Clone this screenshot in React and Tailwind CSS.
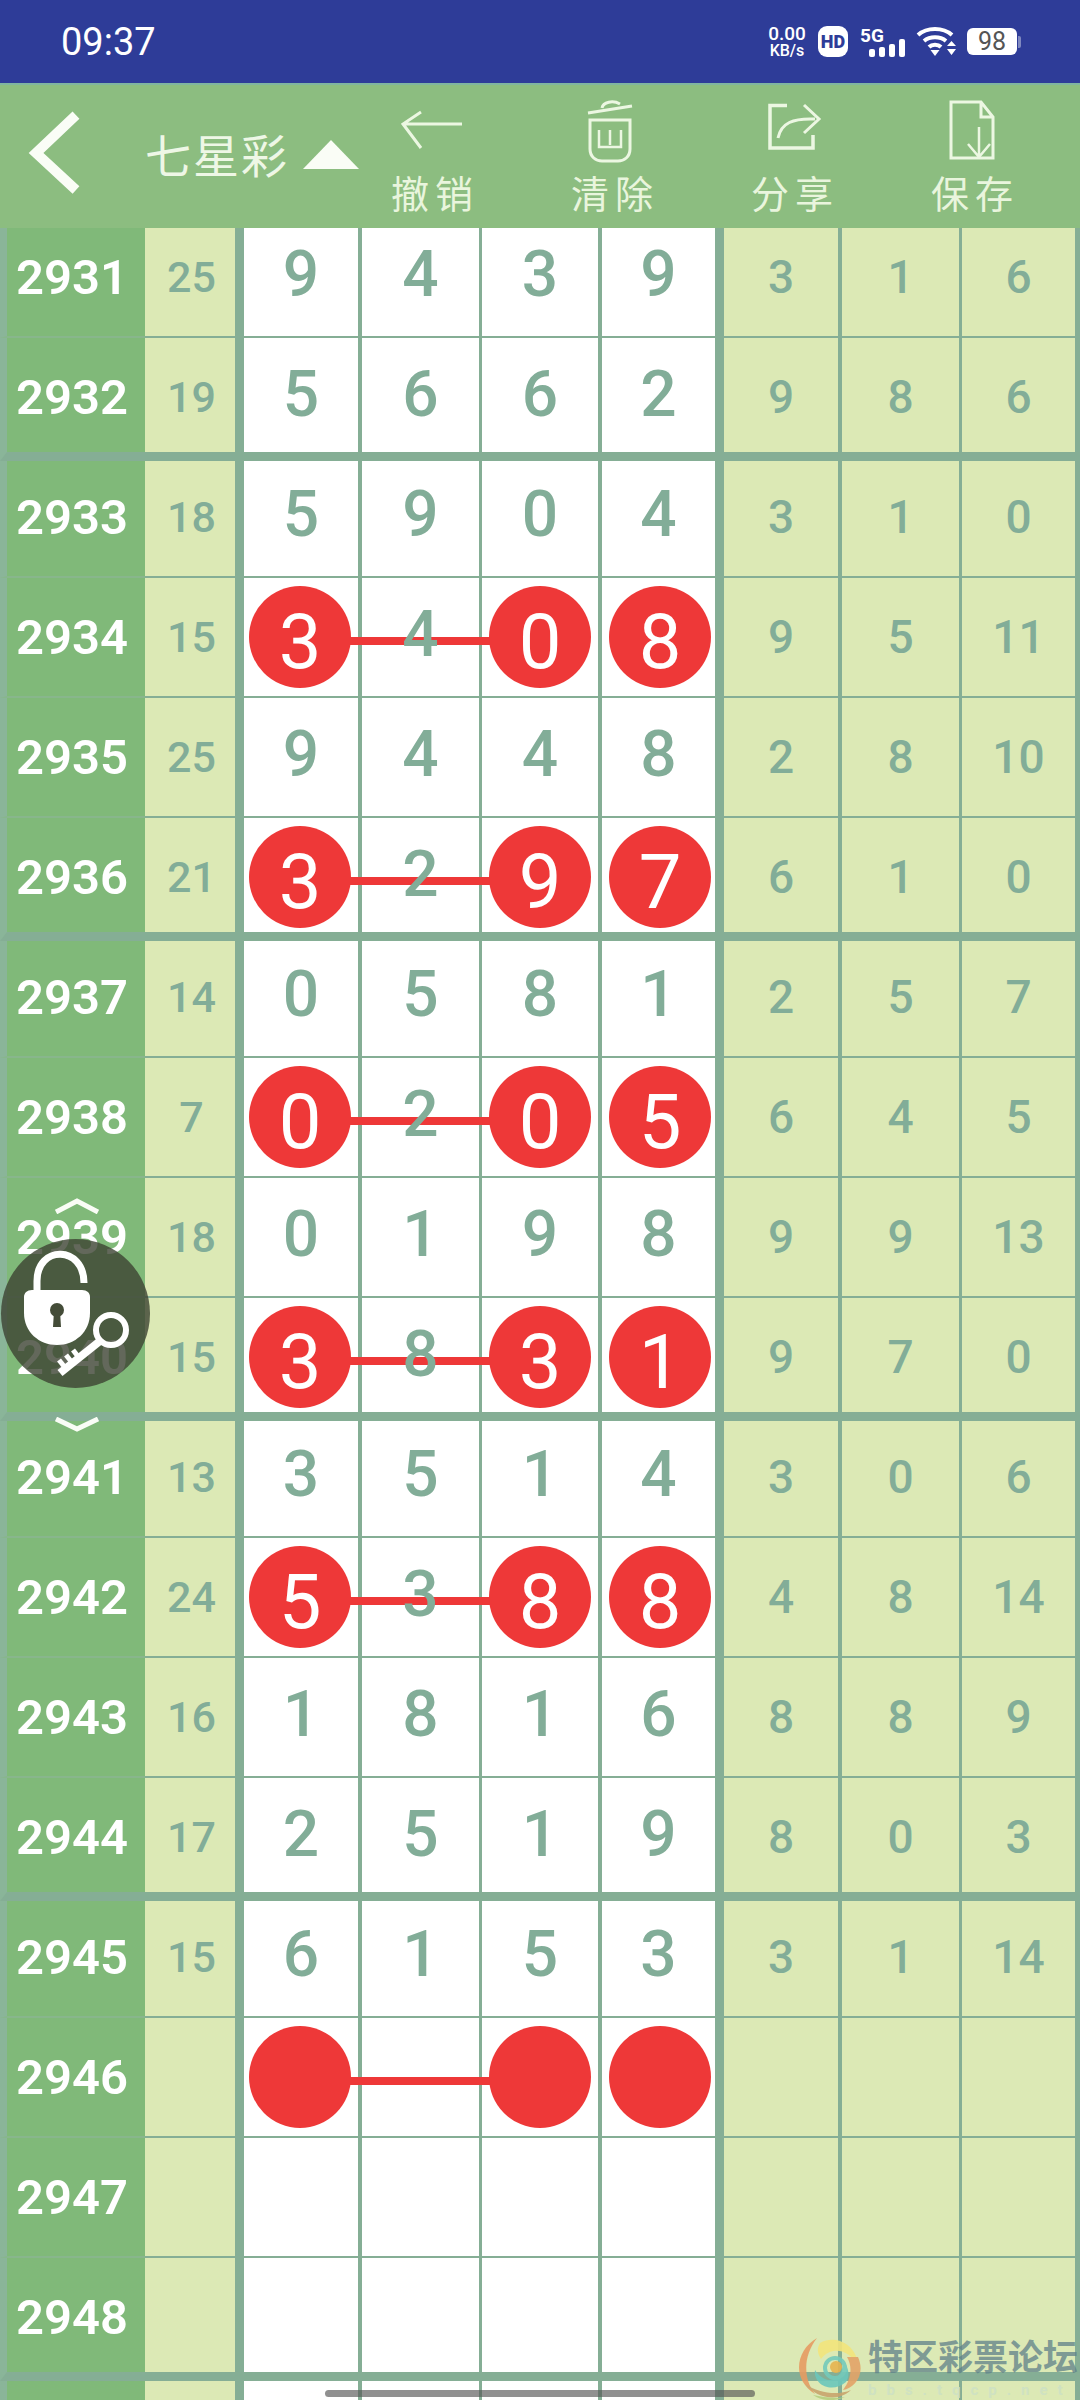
import React from "react";

const rows = [
  { no: 2931, sum: 25, d: [9, 4, 3, 9], r: [3, 1, 6], h: "h-[110px]", line: "pb-[2px]", left: "border-b-[2px] border-b-[#88b68c]", pad: "pb-[10px]" },
  { no: 2932, sum: 19, d: [5, 6, 6, 2], r: [9, 8, 6], pos: 3 },
  { no: 2933, sum: 18, d: [5, 9, 0, 4], r: [3, 1, 0], pos: 0 },
  { no: 2934, sum: 15, d: [3, 4, 0, 8], r: [9, 5, 11], pos: 1, hit: true },
  { no: 2935, sum: 25, d: [9, 4, 4, 8], r: [2, 8, 10], pos: 2 },
  { no: 2936, sum: 21, d: [3, 2, 9, 7], r: [6, 1, 0], pos: 3, hit: true },
  { no: 2937, sum: 14, d: [0, 5, 8, 1], r: [2, 5, 7], pos: 0 },
  { no: 2938, sum: 7, d: [0, 2, 0, 5], r: [6, 4, 5], pos: 1, hit: true },
  { no: 2939, sum: 18, d: [0, 1, 9, 8], r: [9, 9, 13], pos: 2 },
  { no: 2940, sum: 15, d: [3, 8, 3, 1], r: [9, 7, 0], pos: 3, hit: true },
  { no: 2941, sum: 13, d: [3, 5, 1, 4], r: [3, 0, 6], pos: 0 },
  { no: 2942, sum: 24, d: [5, 3, 8, 8], r: [4, 8, 14], pos: 1, hit: true },
  { no: 2943, sum: 16, d: [1, 8, 1, 6], r: [8, 8, 9], pos: 2 },
  { no: 2944, sum: 17, d: [2, 5, 1, 9], r: [8, 0, 3], pos: 3 },
  { no: 2945, sum: 15, d: [6, 1, 5, 3], r: [3, 1, 14], pos: 0 },
  { no: 2946, d: ["", "", "", ""], r: ["", "", ""], pos: 1, hit: true },
  { no: 2947, d: ["", "", "", ""], r: ["", "", ""], pos: 2 },
  { no: 2948, d: ["", "", "", ""], r: ["", "", ""], pos: 3 },
  { d: ["", "", "", ""], r: ["", "", ""], pos: 0 },
];

const posStyles = [
  { h: "h-[117px]", line: "pb-[2px]", left: "border-b-[2px] border-b-[#88b68c]", pad: "pb-[3px]" },
  { h: "h-[120px]", line: "pb-[2px]", left: "border-b-[2px] border-b-[#88b68c]", pad: "" },
  { h: "h-[120px]", line: "pb-[2px]", left: "border-b-[2px] border-b-[#88b68c]", pad: "" },
  { h: "h-[123px]", line: "pb-[9px]", left: "border-b-[9px] border-b-[#85ae95]", pad: "pt-[4px]" },
];

const dWidths = ["w-[114px]", "w-[117px]", "w-[116px]", "w-[113px]"];
const dGaps = ["ml-0", "ml-[4px]", "ml-[3px]", "ml-[4px]"];
const rWidths = ["w-[114px]", "w-[117px]", "w-[113px]"];
const rGaps = ["ml-[9px]", "ml-[4px]", "ml-[3px]"];

function Ball({ value, linked, nudge }) {
  return (
    <div className={`relative flex h-[102px] w-[102px] items-center justify-center rounded-full bg-[#ee3838] pt-[10px] text-[76px] leading-none text-white ${nudge}`}>
      {value}
      {linked && <div className="absolute left-[99px] top-[51px] h-[8px] w-[144px] bg-[#ee3838]" />}
    </div>
  );
}

function Row({ row }) {
  const s = row.h ? row : posStyles[row.pos];
  return (
    <div className={`flex ${s.h}`}>
      <div className={`flex w-[145px] items-center justify-center border-l-[7px] border-l-[#8ab599] bg-[#80b979] pr-[8px] text-[49px] font-semibold leading-none text-white ${s.left} ${s.pad}`}>
        {row.no}
      </div>
      <div className={`flex flex-1 bg-[#85ae95] ${s.line}`}>
        <div className={`flex w-[90px] items-center justify-center bg-[#dce9b5] pl-[3px] text-[43px] font-medium leading-none text-[#82ad98] ${s.pad}`}>
          {row.sum}
        </div>
        {row.d.map((v, i) => {
          const ball = row.hit && i !== 1;
          return (
            <div key={i} className={`flex items-center justify-center bg-white ${dWidths[i]} ${i === 0 ? "ml-[9px]" : dGaps[i]} ${s.pad}`}>
              {ball ? (
                <Ball value={v} linked={i === 0} nudge={i === 3 ? "ml-[3px]" : i === 0 ? "-ml-[2px]" : ""} />
              ) : (
                <span className="relative z-10 mb-[5px] text-[64px] font-medium leading-none text-[#82ad98]">{v}</span>
              )}
            </div>
          );
        })}
        {row.r.map((v, i) => (
          <div key={i} className={`flex items-center justify-center bg-[#dce9b5] text-[46px] font-medium leading-none text-[#82ad98] ${rWidths[i]} ${rGaps[i]} ${s.pad}`}>
            {v}
          </div>
        ))}
      </div>
    </div>
  );
}

function ActionIcon({ name }) {
  const common = { fill: "none", stroke: "#ecf7e2", strokeWidth: 3 };
  return (
    <svg width="70" height="70" viewBox="0 0 70 70" {...common}>
      {name === "undo" && (
        <path d="M65 27H7M24 15 6 27 24 51" strokeWidth="3" />
      )}
      {name === "trash" && (
        <g>
          <path d="M11 16 55 9M25 11c1-6 11-8 18-4" />
          <path d="M13 23H53V52C53 60 47 64 41 64H25C19 64 13 60 13 52Z" />
          <path d="M22 33V50H44V33M33 33V48" strokeWidth="2.5" />
        </g>
      )}
      {name === "share" && (
        <g>
          <path d="M30 8.5H13V51H56V38" strokeWidth="3.5" />
          <path d="M21 41C24 26 36 21 58 22M47 8 62 22 47 36" />
        </g>
      )}
      {name === "save" && (
        <g>
          <path d="M14 5H44L56 20V61H14ZM44 5V20H56" />
          <path d="M42 30V60M31 47 42 60 53 47" strokeWidth="2.5" />
        </g>
      )}
    </svg>
  );
}

function Action({ icon, label }) {
  return (
    <div className="flex w-[180px] flex-col items-center">
      <ActionIcon name={icon} />
      <span className="mt-[6px] pl-[6px] text-[38px] leading-[44px] tracking-[6px] text-[#e9f5dd]">{label}</span>
    </div>
  );
}

function StatusBar() {
  return (
    <div className="flex h-[83px] items-center justify-between bg-[#2e3c98] pl-[61px] pr-[59px] text-white">
      <span className="text-[38px] leading-none">09:37</span>
      <div className="flex items-center">
        <div className="flex w-[40px] flex-col items-center leading-none">
          <span className="text-[19px] font-medium leading-[18px]">0.00</span>
          <span className="text-[16px] font-medium leading-[16px]">KB/s</span>
        </div>
        <div className="ml-[11px] flex h-[31px] w-[30px] items-center justify-center rounded-[9px] bg-white text-[18px] font-black leading-none text-[#2e3c98]">HD</div>
        <div className="relative ml-[12px] h-[31px] w-[45px]">
          <span className="absolute left-0 top-0 text-[19px] font-bold leading-none">5G</span>
          <svg className="absolute bottom-0 right-0" width="36" height="18" viewBox="0 0 36 18" fill="#fff">
            <rect x="0" y="10" width="6" height="8" rx="2" />
            <rect x="10" y="8" width="6" height="10" rx="2" />
            <rect x="20" y="5" width="6" height="13" rx="2" />
            <rect x="30" y="0" width="6" height="18" rx="2" />
          </svg>
        </div>
        <svg className="ml-[11px]" width="41" height="31" viewBox="0 0 41 31" fill="none" stroke="#fff">
          <path d="M2 9C11 1 27 1 36 9" strokeWidth="4" />
          <path d="M8 15C14 10 24 10 30 15" strokeWidth="4" />
          <path d="M13 21C16 18 22 18 25 21" strokeWidth="4" />
          <path d="M14.5 24H23.5L19 30Z" fill="#fff" stroke="none" />
          <path d="M31 20 35.5 15 40 20ZM31 23 35.5 29 40 23Z" fill="#fff" stroke="none" />
        </svg>
        <div className="ml-[10px] flex h-[27px] w-[50px] items-center justify-center rounded-[6px] bg-white text-[25px] leading-none text-[#555555]">98</div>
        <div className="ml-[1px] h-[12px] w-[3px] rounded-r-[2px] bg-[#8089c0]" />
      </div>
    </div>
  );
}

function Header() {
  return (
    <div className="flex h-[145px] border-t-[2px] border-[#80b5a0] bg-[#8cbd80]">
      <div className="flex w-[342px] items-start">
        <svg className="ml-[26px] mt-[25px] shrink-0" width="56" height="84" viewBox="0 0 56 84" fill="none" stroke="#fafdf6" strokeWidth="10">
          <path d="M50 5 10 43 50 80" />
        </svg>
        <span className="ml-[63px] mt-[46px] shrink-0 text-[46px] leading-[52px] tracking-[2px] text-[#eef7e6]">七星彩</span>
        <svg className="ml-[14px] mt-[55px] shrink-0" width="56" height="30" viewBox="0 0 56 30" fill="#fafdf6">
          <path d="M28 0 56 29H0Z" />
        </svg>
      </div>
      <div className="flex pt-[12px]">
        <Action icon="undo" label="撤销" />
        <Action icon="trash" label="清除" />
        <Action icon="share" label="分享" />
        <Action icon="save" label="保存" />
      </div>
    </div>
  );
}

function LockWidget() {
  return (
    <div className="absolute left-0 top-[1198px] z-20 flex w-[150px] flex-col items-center">
      <svg className="ml-[4px]" width="44" height="16" viewBox="0 0 44 16" fill="none" stroke="#fafdf6" strokeWidth="5">
        <path d="M1 14 22 3 43 14" />
      </svg>
      <div className="mt-[25px] h-[149px] w-[149px] rounded-full bg-[#3c4232]/80">
        <svg width="149" height="149" viewBox="0 0 149 149">
          <path d="M36 58V42C36 6 83 6 83 44" fill="none" stroke="#fff" strokeWidth="7" />
          <path d="M31 51H81C86 51 89 54 89 58V74C89 93 74 106 56 106C38 106 23 93 23 74V58C23 54 26 51 31 51Z" fill="#fff" />
          <circle cx="56" cy="71" r="7" fill="#444c38" />
          <path d="M53 72H59L60 88H52Z" fill="#444c38" />
          <circle cx="110" cy="91" r="15" fill="none" stroke="#fff" strokeWidth="6" />
          <path d="M99 102 59 134" stroke="#fff" strokeWidth="8" fill="none" />
          <path d="M58 121 66 131M65 116 73 126M72 111 79 120" stroke="#fff" strokeWidth="5" fill="none" />
        </svg>
      </div>
      <svg className="ml-[4px] mt-[29px]" width="44" height="15" viewBox="0 0 44 15" fill="none" stroke="#fafdf6" strokeWidth="5">
        <path d="M1 2 22 12 43 2" />
      </svg>
    </div>
  );
}

function Watermark() {
  return (
    <div className="absolute left-[795px] top-[2337px] z-20 flex h-[63px] w-[285px] overflow-hidden">
      <svg className="shrink-0" width="67" height="63" viewBox="0 0 67 63" opacity="0.9">
        <path d="M22 1C1 13-4 42 20 57 8 41 8 19 22 1Z" fill="#e79c62" />
        <path d="M25 6C41-3 63 8 63 30 56 13 37 8 26 22 22 16 22 11 25 6Z" fill="#f3e57c" />
        <path d="M63 20C71 38 59 51 48 53 56 43 58 30 52 20Z" fill="#e3a468" />
        <path d="M20 33C18 48 37 57 51 45 56 38 53 28 47 24 50 36 39 46 30 42 26 40 22 37 20 33Z" fill="#6cc7bb" />
        <circle cx="40" cy="31" r="10" fill="none" stroke="#74cabb" strokeWidth="4" />
        <circle cx="41" cy="30" r="6" fill="#e6b450" />
        <path d="M10 47C22 62 44 65 56 53 42 59 24 56 10 47Z" fill="#c9a56e" />
        <path d="M18 58C28 65 42 64 50 60 38 62 28 60 18 58Z" fill="#b6cf80" />
      </svg>
      <div className="ml-[6px] flex flex-col">
        <span className="mt-[2px] whitespace-nowrap text-[35px] font-bold leading-[40px] text-[#5f8089]/75">特区彩票论坛</span>
        <span className="mt-[4px] whitespace-nowrap text-[15px] font-bold leading-[15px] tracking-[10px] text-[#cfe2c2]">bbs.tqcp.net</span>
      </div>
    </div>
  );
}

export default function App() {
  return (
    <div className="relative h-[2400px] w-[1080px] overflow-hidden bg-[#85ae95] font-['Roboto','Noto_Sans_CJK_SC',sans-serif]">
      <StatusBar />
      <Header />
      {rows.map((row, i) => (
        <Row key={i} row={row} />
      ))}
      <LockWidget />
      <Watermark />
      <div className="absolute left-[325px] top-[2390px] z-20 h-[7px] w-[430px] rounded-full bg-[#555555]/65" />
    </div>
  );
}
